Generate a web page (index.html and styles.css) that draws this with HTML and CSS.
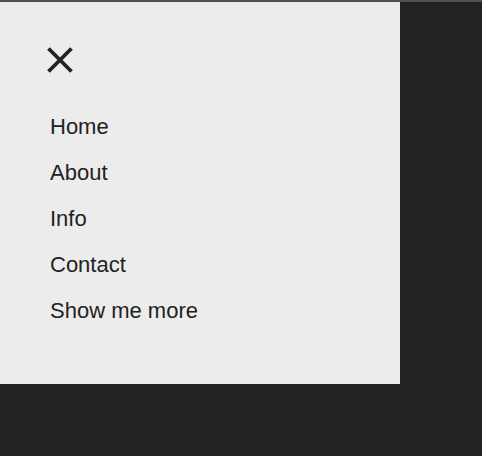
FILE: index.html
```html
<!DOCTYPE html>
<html lang="en">
<head>
    <meta charset="UTF-8">
    <meta name="viewport" content="width=device-width, initial-scale=1.0">
    <title>Menu</title>
    <link rel="stylesheet" href="styles.css">
</head>
<body>
    <div class="sidenav">
        <a href="#" class="closebtn" aria-label="Close">
            <svg width="26" height="26" viewBox="0 0 26 26">
                <path d="M1.5 1.5 L24.5 24.5 M24.5 1.5 L1.5 24.5" stroke="#222" stroke-width="3.8" fill="none"/>
            </svg>
        </a>
        <ul class="nav-links">
            <li><a href="#">Home</a></li>
            <li><a href="#">About</a></li>
            <li><a href="#">Info</a></li>
            <li><a href="#">Contact</a></li>
            <li><a href="#">Show me more</a></li>
        </ul>
    </div>
</body>
</html>
```

FILE: styles.css
```css
html, body {
    height: 100%;
}
body {
    margin: 0;
    background-color: #222;
    border-top: 2px solid #505050;
    box-sizing: border-box;
    font-family: "Liberation Sans", Arial, sans-serif;
}
.sidenav {
    width: 400px;
    height: 382px;
    background-color: #ececec;
    padding: 45px 0 0 47px;
    box-sizing: border-box;
}
.closebtn {
    display: block;
    width: 26px;
    height: 26px;
}
.closebtn svg {
    display: block;
}
.nav-links {
    list-style: none;
    margin: 31px 0 0 3px;
    padding: 0;
}
.nav-links a {
    display: block;
    color: #222;
    text-decoration: none;
    font-size: 22px;
    line-height: 46px;
}
```
